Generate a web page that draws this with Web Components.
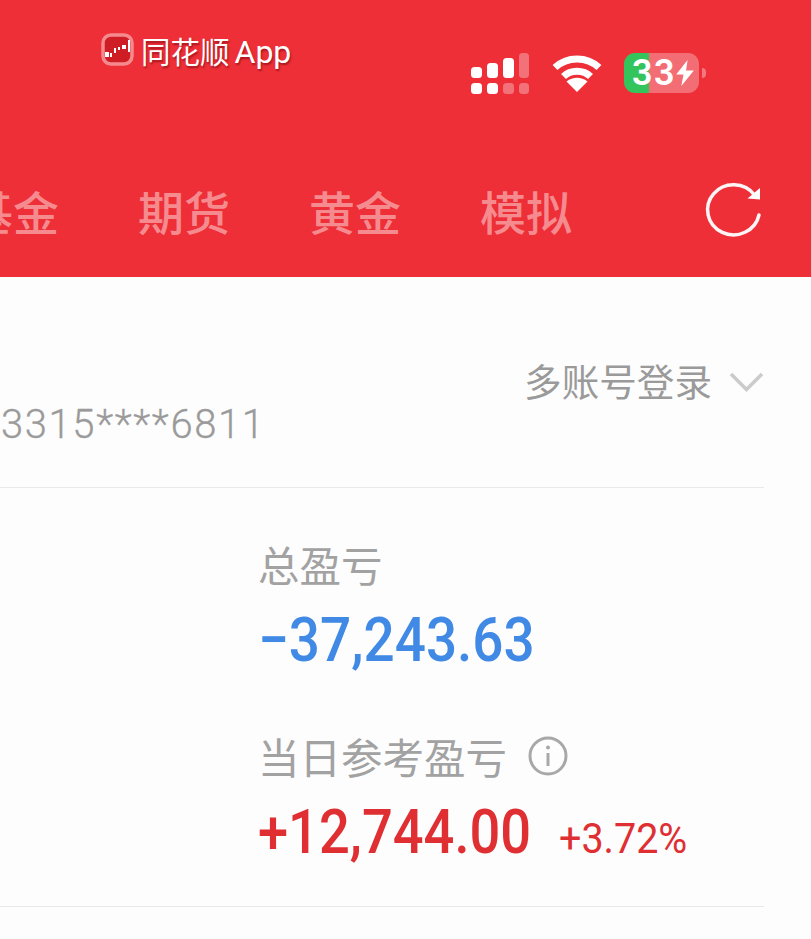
<!DOCTYPE html>
<html lang="zh"><head><meta charset="utf-8"><title>同花顺</title>
<style>
html,body{margin:0;padding:0;background:#fdfdfd}
body{width:811px;height:939px;overflow:hidden;font-family:Roboto,"Noto Sans CJK SC",sans-serif}
</style></head><body>
<app-header></app-header>
<account-row></account-row>
<profit-panel></profit-panel>
<script>
function el(name,html){customElements.define(name,class extends HTMLElement{constructor(){super();this.attachShadow({mode:'open'}).innerHTML=html}})}
const CJK='"Noto Sans CJK SC",sans-serif';
el('status-icons',`<style>
:host{display:flex;align-items:flex-start;height:42px}
svg{display:block}
.wifi{margin-left:22px;margin-top:1px}
.bat{margin-left:22px;width:75px;height:40px;border-radius:11px;overflow:hidden;background:linear-gradient(90deg,#33c45c 0 25px,rgba(255,255,255,.3) 25px);display:flex;align-items:center;padding-left:8px;box-sizing:border-box;color:#fff;font:600 36px/40px Roboto,sans-serif;letter-spacing:1.500px}
.nub{width:4px;height:10px;margin:15px 0 0 3px;background:rgba(255,255,255,.35);border-radius:0 4px 4px 0}
.bat svg{flex:none}
</style>
<svg width="59" height="41" viewBox="0 0 59 41" fill="#fff">
<rect x="0" y="14" width="11" height="11" rx="3.5"/><rect x="16" y="10" width="11" height="15" rx="3.5"/><rect x="32" y="5" width="11" height="20" rx="3.5"/><rect x="48" y="0" width="10" height="25" rx="3.5" opacity=".32"/>
<rect x="0" y="30" width="11" height="11" rx="3.5"/><rect x="16" y="30" width="11" height="11" rx="3.5"/><rect x="32" y="30" width="11" height="11" rx="3.5" opacity=".32"/><rect x="48" y="30" width="10" height="11" rx="3.5" opacity=".32"/></svg>
<svg class="wifi" width="50" height="38" viewBox="0 0 50 38" fill="none" stroke="#fff" stroke-width="7">
<path d="M3 13.500C15 2 35 2 47 13.500"/><path d="M11.500 22.500C18.500 15.500 31.500 15.500 38.500 22.500"/><path d="M25 38L14.500 27.500C21 22.500 29 22.500 35.500 27.500Z" fill="#fff" stroke="none"/></svg>
<div class="bat"><span>33</span><svg width="18" height="26" viewBox="0 0 17 25" fill="#fff"><path d="M11 0L0 14H7L5 25L17 10H9.500Z"/></svg></div><div class="nub"></div>`);
el('tab-item',`<style>:host{display:block;flex:none;width:90px;font:500 46px/54px ${CJK};color:rgba(255,255,255,.46);white-space:nowrap}</style><slot></slot>`);
el('app-header',`<style>
:host{display:block;height:277px;background:#ee2f38;overflow:hidden;box-sizing:border-box}
.top{display:flex;align-items:flex-start;padding:31px 105px 0 101px;height:148px;box-sizing:border-box}
.app{display:flex;align-items:center;gap:7px;color:#fff;font:29.500px/38px ${CJK};text-shadow:1px 2px 2px rgba(110,0,10,.55)}
.app svg{margin-top:-3px}
.app b{font:400 32px/38px Roboto,sans-serif;margin-left:5px}
status-icons{margin:22px 0 0 auto}
.nav{display:flex;align-items:center;height:54px;margin:35px 49px 0 -33px;gap:81px}
.ref{margin-left:auto;display:block;flex:none;overflow:visible}
</style>
<div class="top"><div class="app"><svg width="33" height="33" viewBox="0 0 33 33"><rect x="2" y="2" width="29" height="29" rx="8" fill="#cf1d26" stroke="#f58a8e" stroke-width="3.500"/><g fill="#fff"><rect x="4" y="19" width="4" height="5"/><rect x="9" y="20" width="2" height="4"/><rect x="13" y="15" width="2" height="5"/><rect x="17" y="14" width="2" height="3"/><rect x="21" y="12" width="4" height="4"/><rect x="27" y="7" width="2" height="12"/></g></svg><span>同花顺<b>App</b></span></div><status-icons></status-icons></div>
<div class="nav"><tab-item>基金</tab-item><tab-item>期货</tab-item><tab-item>黄金</tab-item><tab-item>模拟</tab-item>
<svg class="ref" width="58" height="54" viewBox="0 1 58 54" fill="none"><path d="M50.500 13A26 25 0 1 0 55 33" stroke="#fff" stroke-width="3.500" stroke-linecap="round" opacity=".95"/><path d="M56 6V17.500L43.500 16.500Z" fill="#fff"/></svg></div>`);
el('account-row',`<style>
:host{display:block;height:211px;margin-right:47px;border-bottom:1px solid #e8e8e8;color:#9a9a9a;box-sizing:border-box}
.row{display:flex;justify-content:space-between;align-items:flex-start;padding-top:79px}
.no{font:300 40px/48px Roboto,sans-serif;margin-top:45px;margin-left:1px;letter-spacing:1.600px;-webkit-text-stroke:.3px #9a9a9a}
.multi{display:flex;align-items:center;font:37.600px/48px ${CJK}}
svg{margin-left:17px;margin-top:4px}
</style><div class="row"><div class="no">3315****6811</div><div class="multi">多账号登录<svg width="35" height="22" viewBox="0 0 35 22" fill="none" stroke="#cbcbcb" stroke-width="3.500"><path d="M2 3L17.500 18.500L33 3"/></svg></div></div>`);
el('metric-label',`<style>:host{display:flex;align-items:center;font:41.500px/50px ${CJK};color:#a2a2a2;height:50px}</style><slot></slot>`);
el('metric-value',`<style>:host{display:block;height:62px;white-space:nowrap;color:var(--c)}
.w{display:inline-block;transform:scaleX(var(--sx,.875));transform-origin:0 50%;font:var(--fw,500) var(--fs,62px)/62px Roboto,sans-serif}</style><span class="w"><slot></slot></span>`);
el('profit-panel',`<style>
:host{display:block;height:419px;margin-right:47px;border-bottom:1px solid #e8e8e8;box-sizing:border-box;padding:51px 0 0 258px}
.v1{--c:#4089e4;margin-top:20px;--sx:.885}
.l2{margin-top:60px}
.line{display:flex;align-items:baseline;margin-top:20px}
.v2{--c:#df2f33;width:301px}
.v3{--c:#df2f33;--fs:42px;--sx:.94;--fw:400}
.info{margin-left:21px;flex:none}
</style>
<metric-label>总盈亏</metric-label>
<metric-value class="v1">−37,243.63</metric-value>
<metric-label class="l2">当日参考盈亏<svg class="info" width="40" height="40" viewBox="0 0 40 40" fill="none" stroke="#a8a8a8"><circle cx="20" cy="20" r="18" stroke-width="3"/><path d="M20 17V30" stroke-width="3"/><circle cx="20" cy="11.500" r="2" fill="#a8a8a8" stroke="none"/></svg></metric-label>
<div class="line"><metric-value class="v2">+12,744.00</metric-value><metric-value class="v3">+3.72%</metric-value></div>`);
</script></body></html>
